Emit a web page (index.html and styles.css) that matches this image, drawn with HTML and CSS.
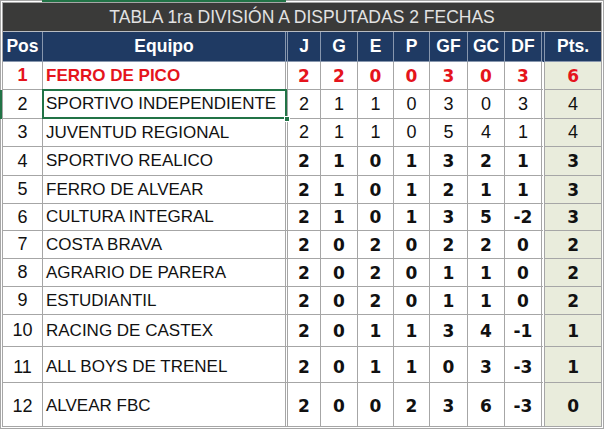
FILE: index.html
```html
<!DOCTYPE html>
<html lang="es">
<head>
<meta charset="utf-8">
<title>Tabla 1ra División A</title>
<link rel="stylesheet" href="styles.css">
</head>
<body>
<div class="sheet">
  <span class="colmark"></span>
  <span class="rowmark"></span>
  <table class="tabla">
    <colgroup>
      <col class="c-pos"><col class="c-eq"><col class="c-j"><col class="c-g"><col class="c-e"><col class="c-p"><col class="c-gf"><col class="c-gc"><col class="c-df"><col class="c-pts">
    </colgroup>
    <thead>
      <tr class="title"><th colspan="10">TABLA 1ra DIVISIÓN A DISPUTADAS 2 FECHAS</th></tr>
      <tr class="head">
        <th>Pos</th><th class="eq">Equipo</th><th>J</th><th>G</th><th>E</th><th>P</th><th>GF</th><th>GC</th><th class="df">DF</th><th class="pts">Pts.</th>
      </tr>
    </thead>
    <tbody>
      <tr class="r h28 lead"><td class="pos">1</td><td class="eq">FERRO DE PICO</td><td>2</td><td>2</td><td>0</td><td>0</td><td>3</td><td>0</td><td class="df">3</td><td class="pts">6</td></tr>
      <tr class="r h29 plain"><td class="pos">2</td><td class="eq sel">SPORTIVO INDEPENDIENTE<span class="handle"></span></td><td>2</td><td>1</td><td>1</td><td>0</td><td>3</td><td>0</td><td class="df">3</td><td class="pts">4</td></tr>
      <tr class="r h28 plain"><td class="pos">3</td><td class="eq">JUVENTUD REGIONAL</td><td>2</td><td>1</td><td>1</td><td>0</td><td>5</td><td>4</td><td class="df">1</td><td class="pts">4</td></tr>
      <tr class="r h29 bold"><td class="pos">4</td><td class="eq">SPORTIVO REALICO</td><td>2</td><td>1</td><td>0</td><td>1</td><td>3</td><td>2</td><td class="df">1</td><td class="pts">3</td></tr>
      <tr class="r h28 bold"><td class="pos">5</td><td class="eq">FERRO DE ALVEAR</td><td>2</td><td>1</td><td>0</td><td>1</td><td>2</td><td>1</td><td class="df">1</td><td class="pts">3</td></tr>
      <tr class="r h27 bold"><td class="pos">6</td><td class="eq">CULTURA INTEGRAL</td><td>2</td><td>1</td><td>0</td><td>1</td><td>3</td><td>5</td><td class="df">-2</td><td class="pts">3</td></tr>
      <tr class="r h28 bold"><td class="pos">7</td><td class="eq">COSTA BRAVA</td><td>2</td><td>0</td><td>2</td><td>0</td><td>2</td><td>2</td><td class="df">0</td><td class="pts">2</td></tr>
      <tr class="r h28 bold"><td class="pos">8</td><td class="eq">AGRARIO DE PARERA</td><td>2</td><td>0</td><td>2</td><td>0</td><td>1</td><td>1</td><td class="df">0</td><td class="pts">2</td></tr>
      <tr class="r h28 bold"><td class="pos">9</td><td class="eq">ESTUDIANTIL</td><td>2</td><td>0</td><td>2</td><td>0</td><td>1</td><td>1</td><td class="df">0</td><td class="pts">2</td></tr>
      <tr class="r h32 bold"><td class="pos">10</td><td class="eq">RACING DE CASTEX</td><td>2</td><td>0</td><td>1</td><td>1</td><td>3</td><td>4</td><td class="df">-1</td><td class="pts">1</td></tr>
      <tr class="r h36 bold"><td class="pos">11</td><td class="eq">ALL BOYS DE TRENEL</td><td>2</td><td>0</td><td>1</td><td>1</td><td>0</td><td>3</td><td class="df">-3</td><td class="pts">1</td></tr>
      <tr class="r h43 bold last"><td class="pos">12</td><td class="eq">ALVEAR FBC</td><td>2</td><td>0</td><td>0</td><td>2</td><td>3</td><td>6</td><td class="df">-3</td><td class="pts">0</td></tr>
    </tbody>
  </table>
</div>
</body>
</html>
```

FILE: styles.css
```css
* { box-sizing: border-box; }

html, body {
  margin: 0;
  padding: 0;
  background: #ffffff;
}

.sheet {
  position: relative;
  width: 606px;
  height: 431px;
  background: #ffffff;
}

.tabla {
  border-collapse: separate;
  border-spacing: 0;
  table-layout: fixed;
  width: 604px;
  border: 3px double #a6a6a6;
  font-family: "Liberation Sans", Arial, sans-serif;
  font-size: 17px;
  color: #111111;
}

.c-pos { width: 40px; }
.c-eq { width: 245px; }
.c-j { width: 33px; }
.c-g { width: 37px; }
.c-e { width: 36px; }
.c-p { width: 36px; }
.c-gf { width: 38px; }
.c-gc { width: 37px; }
.c-df { width: 40px; }
.c-pts { width: 56px; }

th, td {
  padding: 0;
  text-align: center;
  vertical-align: middle;
  white-space: nowrap;
  overflow: hidden;
}

/* Title bar */
.title th {
  height: 29px;
  background: #3a3a39;
  color: #e2e2e2;
  font-weight: normal;
  font-size: 17.5px;
  border-bottom: 1px solid #b8bcc2;
  padding-top: 1px;
}

/* Column header */
.head th {
  height: 30px;
  background: #1f3a63;
  color: #ffffff;
  font-weight: bold;
  font-size: 17.5px;
  border-right: 1px solid #8796ad;
  border-bottom: 1px solid #8796ad;
}
.head th.eq { border-right: 3px double #8796ad; }
.head th.df { border-right: 4px double #8796ad; }
.head th.pts { border-right: 0; }

/* Body cells */
tbody td {
  border-right: 1px solid #a6a6a6;
  border-bottom: 1px solid #a6a6a6;
  background: #ffffff;
  font-size: 18px;
}
tbody td.eq {
  text-align: left;
  padding-left: 3px;
  font-size: 17px;
  border-right: 3px double #a6a6a6;
}
tbody td.pos { font-size: 18px; }
tbody td.df { border-right: 4px double #a6a6a6; }
tbody td.pts {
  background: #e9ecdc;
  border-right: 0;
}
tbody tr.last td { border-bottom: 0; }

.h27 td { height: 27px; }
.h28 td { height: 28px; }
.h29 td { height: 29px; }
.h32 td { height: 32px; }
.h36 td { height: 36px; padding-top: 5px; }
.h43 td { height: 43px; padding-top: 3px; }

/* Leader row */
.lead td {
  color: #e5141c;
  font-weight: bold;
  font-family: "DejaVu Sans", Verdana, sans-serif;
  font-size: 17px;
}
.lead td.pos, .lead td.eq {
  font-family: "Liberation Sans", Arial, sans-serif;
  font-size: 17px;
}
.lead td.pos { font-size: 18px; }

/* Bold number rows */
.bold td {
  font-family: "DejaVu Sans", Verdana, sans-serif;
  font-weight: bold;
  font-size: 17px;
}
.bold td.pos, .bold td.eq {
  font-family: "Liberation Sans", Arial, sans-serif;
  font-weight: normal;
  font-size: 17px;
}
.bold td.pos { font-size: 18px; }

/* Selected cell */
td.sel { position: relative; overflow: visible; }
td.sel::after {
  content: "";
  position: absolute;
  left: -1px;
  top: -1px;
  right: -2px;
  bottom: -1px;
  border: 2px solid #217346;
  pointer-events: none;
}
.handle {
  position: absolute;
  right: -5px;
  bottom: -4px;
  width: 6px;
  height: 6px;
  background: #217346;
  border: 1px solid #ffffff;
  z-index: 2;
}

/* Excel selection indicators */
.colmark {
  position: absolute;
  left: 42px;
  top: 0;
  width: 244px;
  height: 2px;
  background: #217346;
  z-index: 3;
}
.rowmark {
  position: absolute;
  left: 0;
  top: 90px;
  width: 2px;
  height: 29px;
  background: #217346;
  z-index: 3;
}
```
